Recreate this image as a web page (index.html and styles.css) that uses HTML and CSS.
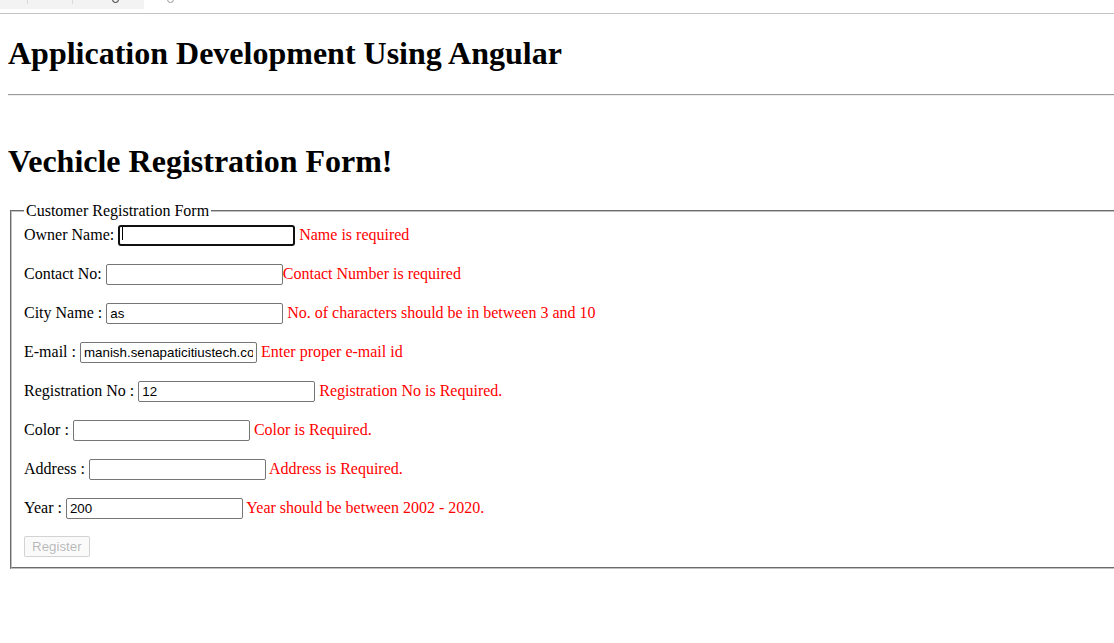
FILE: index.html
```html
<!DOCTYPE html>
<html lang="en">
<head>
<meta charset="utf-8">
<title>Vechicle Registration</title>
<link rel="stylesheet" href="styles.css">
</head>
<body>
<div class="chrome">
  <div class="tabs">
    <span class="sep sep-a"></span>
    <span class="sep sep-b"></span>
    <span class="glyph glyph-dark"></span>
  </div>
  <div class="active-tab"><span class="glyph glyph-light"></span></div>
</div>
<div class="page">
  <h1 class="title">Application Development Using Angular</h1>
  <hr class="rule">
  <h1 class="form-title">Vechicle Registration Form!</h1>
  <fieldset class="form-box">
    <legend class="legend">Customer Registration Form</legend>
    <div class="row">Owner Name: <span class="focus-wrap"><input class="field is-focused" type="text" value=""><span class="caret"></span></span> <span class="err">Name is required</span></div>
    <div class="row">Contact No: <input class="field" type="text" value=""><span class="err">Contact Number is required</span></div>
    <div class="row">City Name : <input class="field" type="text" value="as"> <span class="err">No. of characters should be in between 3 and 10</span></div>
    <div class="row">E-mail : <input class="field" type="text" value="manish.senapaticitiustech.com"> <span class="err">Enter proper e-mail id</span></div>
    <div class="row">Registration No : <input class="field" type="text" value="12"> <span class="err">Registration No is Required.</span></div>
    <div class="row">Color : <input class="field" type="text" value=""> <span class="err">Color is Required.</span></div>
    <div class="row">Address : <input class="field" type="text" value=""> <span class="err">Address is Required.</span></div>
    <div class="row">Year : <input class="field" type="text" value="200"> <span class="err">Year should be between 2002 - 2020.</span></div>
    <div class="row row-last"><button class="btn" type="button" disabled>Register</button></div>
  </fieldset>
</div>
</body>
</html>
```

FILE: styles.css
```css
html, body {
  margin: 0;
  padding: 0;
  overflow: hidden;
  background: #ffffff;
}

body {
  font-family: "Liberation Serif", "Times New Roman", serif;
  font-size: 16px;
  color: #000000;
}

.chrome {
  display: flex;
  height: 13px;
  border-bottom: 1px solid #c4c4c4;
  background: #ffffff;
}

.tabs {
  position: relative;
  width: 144px;
  height: 9px;
  background: #f3f3f3;
}

.active-tab {
  position: relative;
  flex: 1;
  height: 9px;
  background: #ffffff;
  border-bottom-left-radius: 4px;
}

.sep {
  position: absolute;
  top: 0;
  width: 1px;
  height: 4px;
  background: #dadada;
}

.sep-a { left: 27px; }
.sep-b { left: 72px; }

.glyph {
  position: absolute;
  top: -4px;
  width: 5px;
  height: 5px;
  border-radius: 50%;
  border: 1px solid #333;
}

.glyph-dark { left: 112px; border-color: #2a2a2a; }
.glyph-light { left: 23px; border-color: #9a9a9a; }

.page {
  width: 1400px;
  padding: 0 8px;
}

.title {
  font-size: 32px;
  font-weight: bold;
  margin: 21.44px 0;
}

.rule {
  margin: 0;
  border: none;
  border-top: 1px solid #9a9a9a;
  border-bottom: 1px solid #eeeeee;
  height: 0;
}

.form-title {
  font-size: 32px;
  font-weight: bold;
  margin: 47px 0 22.44px;
}

.form-box {
  margin: 0 2px;
  padding: 2.6px 12px 10px;
  border: 2px groove #c0c0c0;
  border-right: none;
}

.legend {
  padding: 0 2px;
  font-size: 16px;
}

.row {
  height: 23px;
  line-height: 23px;
  margin-bottom: 16px;
  white-space: nowrap;
}

.row-last {
  height: 22px;
  line-height: 21px;
  margin-bottom: 0;
}

.field {
  box-sizing: border-box;
  width: 177px;
  height: 21px;
  padding: 1px 3px;
  border: 1px solid #767676;
  border-radius: 2px;
  font-family: "Liberation Sans", Arial, sans-serif;
  font-size: 13.333px;
  color: #000000;
  background: #ffffff;
  vertical-align: baseline;
  margin: 0;
}

.focus-wrap {
  position: relative;
  display: inline-block;
}

.is-focused {
  border: 2px solid #101010;
  border-radius: 3px;
  padding: 0 2px;
}

.caret {
  position: absolute;
  left: 4px;
  top: 4px;
  width: 1px;
  height: 13px;
  background: #000000;
}

.err {
  color: #ff0000;
}

.btn {
  box-sizing: border-box;
  height: 21px;
  margin-top: 1px;
  padding: 1px 7px;
  font-family: "Liberation Sans", Arial, sans-serif;
  font-size: 13.333px;
  color: rgba(16, 16, 16, 0.3);
  background: rgba(239, 239, 239, 0.3);
  border: 1px solid rgba(118, 118, 118, 0.3);
  border-radius: 2px;
  vertical-align: top;
}
```
